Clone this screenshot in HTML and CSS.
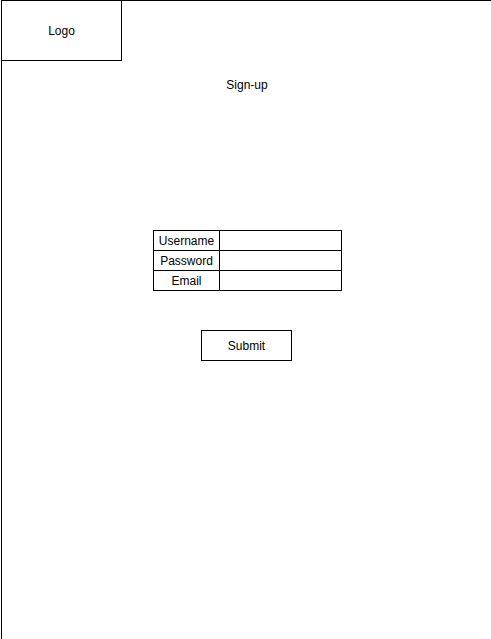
FILE: index.html
```html
<!DOCTYPE html>
<html>
<head>
<meta charset="utf-8">
<link rel="stylesheet" href="styles.css">
</head>
<body>
<div class="frame">
  <div class="logo">Logo</div>
  <div class="title">Sign-up</div>
  <table class="form">
    <colgroup><col class="c1"><col class="c2"></colgroup>
    <tr><td class="label">Username</td><td class="field"></td></tr>
    <tr><td class="label">Password</td><td class="field"></td></tr>
    <tr><td class="label">Email</td><td class="field"></td></tr>
  </table>
  <div class="submit">Submit</div>
</div>
</body>
</html>
```
FILE: styles.css
```css
html, body {
  margin: 0;
  padding: 0;
  background: #fff;
}
body {
  font-family: "Liberation Sans", Arial, sans-serif;
  font-size: 12px;
  color: #000;
}
.frame {
  margin-left: 1px;
  height: 638px;
  border-top: 1px solid #000;
  border-left: 1px solid #000;
  display: flex;
  flex-direction: column;
  align-items: flex-start;
}
.logo {
  width: 119px;
  height: 59px;
  border-right: 1px solid #000;
  border-bottom: 1px solid #000;
  display: flex;
  align-items: center;
  justify-content: center;
  line-height: 14px;
}
.title {
  align-self: stretch;
  margin-top: 17px;
  line-height: 14px;
  height: 14px;
  text-align: center;
  padding-left: 1px;
}
.form {
  margin: 138px 0 0 151px;
  border-collapse: collapse;
  border: 1px solid #000;
  table-layout: fixed;
  width: 188px;
}
.c1 { width: 66px; }
.c2 { width: 122px; }
.form td {
  border: 1px solid #000;
  padding: 0;
  height: 19px;
  line-height: 14px;
}
.label {
  text-align: center;
}
.submit {
  margin: 39px 0 0 199px;
  width: 89px;
  height: 29px;
  border: 1px solid #000;
  display: flex;
  align-items: center;
  justify-content: center;
  line-height: 14px;
}
```
